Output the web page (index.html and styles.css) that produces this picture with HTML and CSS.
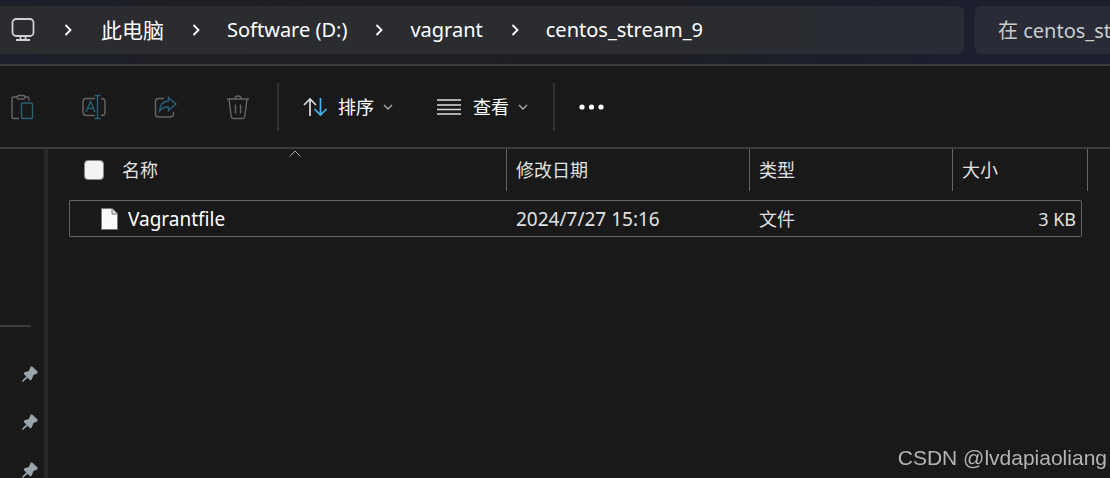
FILE: index.html
```html
<!DOCTYPE html>
<html lang="zh-CN">
<head>
<meta charset="utf-8">
<meta name="viewport" content="width=device-width, initial-scale=1">
<title>centos_stream_9</title>
<link rel="stylesheet" href="styles.css">
</head>
<body>
<svg class="defs" width="0" height="0" aria-hidden="true">
  <symbol id="chevron" viewBox="0 0 8 12"><path d="M1.500 1 6.500 6 1.500 11"/></symbol>
  <symbol id="down" viewBox="0 0 10 6"><path d="M1 1 5 5 9 1"/></symbol>
  <symbol id="pin" viewBox="0 0 16 16"><path d="M8.700 .4 10.500.7 15.500 5.500 15.600 7.200 11.300 9.200 9.800 13.500 8.300 14.400 5.500 11.800 1.300 15.700.2 15.700.3 14.500 4.200 10.500 1.700 7.800 2.500 6.200 6.700 5Z"/></symbol>
</svg>
<header class="topbar">
  <nav class="address" aria-label="路径">
    <svg class="pc" viewBox="0 0 24 24"><rect x="1.500" y="1" width="21" height="17" rx="3.500"/><path d="M9.500 18v4M14.500 18v4M5 22h14"/></svg>
    <svg class="sep"><use href="#chevron"/></svg>
    <a class="cjk" href="#">此电脑</a>
    <svg class="sep"><use href="#chevron"/></svg>
    <a href="#">Software (D:)</a>
    <svg class="sep"><use href="#chevron"/></svg>
    <a href="#">vagrant</a>
    <svg class="sep"><use href="#chevron"/></svg>
    <a href="#">centos_stream_9</a>
  </nav>
  <input class="search" type="text" aria-label="搜索" placeholder="在 centos_stream_9 中搜索">
</header>
<div class="toolbar">
  <div class="group edit">
    <button aria-label="粘贴" disabled><svg class="tool" viewBox="0 0 24 26"><path d="M7 3H3.500Q2 3 2 4.500v18.500q0 1.500 1.500 1.500H9M15 3h2.500Q19 3 19 4.500v2"/><rect x="7" y="1.500" width="8" height="3.500" rx="1.700"/><rect class="blue" x="11.500" y="9" width="11" height="15.500" rx="1.500"/></svg></button>
    <button aria-label="重命名" disabled><svg class="tool" viewBox="0 0 24 26"><path d="M13 4.500H4.500Q1 4.500 1 8v10q0 3.500 3.500 3.500H13M19 4.500h.5Q23 4.500 23 8v10q0 3.500-3.500 3.500H19"/><path class="blue" d="M4 18 8.500 7.500 13 18M5.500 14.500h6M12.500 1.500h6M15.500 1.500v23M12.500 24.500h6"/></svg></button>
    <button aria-label="共享" disabled><svg class="tool" viewBox="0 0 24 26"><path d="M10 4.500H4.500Q1.500 4.500 1.500 7.500v12.500q0 3 3 3H16q3.500 0 3.500-3v-2"/><path class="blue" d="M14.500 3.500 22 10 14.500 16.500V13Q9 12.500 5.500 17 6 7.500 14.500 7Z"/></svg></button>
    <button aria-label="删除" disabled><svg class="tool" viewBox="0 0 24 26"><path d="M1 5h22M8.500 5Q9 2 12 2t3.500 3M3 5l2.200 17.500q.3 2 2 2h9.600q1.700 0 2-2L21 5M9.500 10.500v9M14.500 10.500v9"/></svg></button>
  </div>
  <div class="group menus">
    <button><svg class="sort" viewBox="0 0 26 20"><path d="M8 19V2M2 8 8 2l6 6"/><path class="bright" d="M18.500 1v17M12.500 12l6 6 6-6"/></svg>排序<svg class="down"><use href="#down"/></svg></button>
    <button><svg class="lines" viewBox="0 0 24 16"><path d="M0 1h24M0 6h24M0 10.500h24M0 15h24"/></svg>查看<svg class="down"><use href="#down"/></svg></button>
  </div>
  <div class="group more">
    <button aria-label="更多"><svg class="dots" viewBox="0 0 25 6"><circle cx="3" cy="3" r="2.600"/><circle cx="12.500" cy="3" r="2.600"/><circle cx="22" cy="3" r="2.600"/></svg></button>
  </div>
</div>
<div class="body">
  <aside class="side">
    <hr>
    <ul>
      <li><svg><use href="#pin"/></svg></li>
      <li><svg><use href="#pin"/></svg></li>
      <li><svg><use href="#pin"/></svg></li>
    </ul>
  </aside>
  <main>
    <table>
      <colgroup><col><col class="c-date"><col class="c-type"><col class="c-size"></colgroup>
      <thead>
        <tr>
          <th><div class="head first"><input id="all" type="checkbox"><label for="all">名称</label><svg class="asc" viewBox="0 0 12 7"><path d="M.5 6.500 6 1l5.500 5.500"/></svg></div></th>
          <th><div class="head">修改日期</div></th>
          <th><div class="head">类型</div></th>
          <th><div class="head last">大小</div></th>
        </tr>
      </thead>
      <tbody>
        <tr>
          <td><div class="file"><svg viewBox="0 0 17 22"><path d="M.5.5H11l5.500 5.500v15.500H.5Z"/><path class="fold" d="M11 .5V6h5.500"/></svg>Vagrantfile</div></td>
          <td class="date">2024/7/27 15:16</td>
          <td>文件</td>
          <td>3 KB</td>
        </tr>
      </tbody>
    </table>
  </main>
</div>
<div class="watermark">CSDN @lvdapiaoliang</div>
</body>
</html>
```
FILE: styles.css
```css
* { box-sizing: border-box; }
body {
  margin: 0;
  min-height: 100vh;
  display: flex;
  flex-direction: column;
  overflow: hidden;
  background: #191919;
  color: #fff;
  font: 18px/24px "Noto Sans", "Noto Sans CJK SC", sans-serif;
}
svg { flex: none; fill: none; stroke: currentColor; }
.defs { position: absolute; }
button { display: flex; align-items: center; padding: 0; border: 0; background: none; color: inherit; font: inherit; }

.topbar {
  display: flex;
  gap: 11px;
  padding: 6px 0 10px;
  border-bottom: 2px solid #3b3b3b;
  background: linear-gradient(90deg, #1b202b, #1f1f25 15%, #1e1f25 60%, #1b1f2e 85%);
}
.address {
  flex: 1;
  display: flex;
  align-items: center;
  height: 48px;
  padding-left: 11px;
  border-radius: 0 6px 6px 0;
  background: linear-gradient(90deg, #2b2c30 70%, #292c35);
  font-size: 20px;
}
.address a { color: #fff; text-decoration: none; white-space: nowrap; }
.address .cjk { font-size: 21px; }
.pc { width: 24px; height: 24px; margin-right: 1px; color: #d0d0d0; stroke-width: 1.8; }
.sep { width: 8px; height: 12px; margin: 0 27px 0 28px; stroke-width: 1.8; }
.pc + .sep { margin-right: 29px; }
.search {
  width: 135px;
  height: 48px;
  padding: 0 0 0 23px;
  border: 0;
  border-radius: 6px 0 0 6px;
  background: #292c37;
  color: #fff;
  font: 20px "Noto Sans", "Noto Sans CJK SC", sans-serif;
}
.search::placeholder { color: #ccc; opacity: 1; }

.toolbar { display: flex; align-items: center; height: 83px; border-bottom: 2px solid #3b3b3b; }
.group { display: flex; align-items: center; height: 48px; }
.edit { gap: 48px; padding: 0 27px 0 10px; }
.tool { width: 24px; height: 26px; color: #656565; stroke-width: 1.4; }
.blue { stroke: #296078; }
.menus { gap: 44px; padding: 0 25px 0 23px; border: solid #303030; border-width: 0 2px; }
.sort { width: 26px; height: 20px; margin-right: 10px; color: #ddd; stroke-width: 1.7; }
.bright { stroke: #45b3ee; }
.lines { width: 24px; height: 16px; margin-right: 12px; color: #ddd; stroke-width: 1.5; }
.down { width: 10px; height: 6px; margin-left: 9px; color: #aaa; stroke-width: 1.4; }
.more { padding-left: 24px; }
.dots { width: 25px; height: 6px; fill: #fff; stroke: none; }

.body { flex: 1; display: flex; }
.side { width: 48px; border-right: 4px solid #292929; }
.side hr { width: 31px; margin: 176px 0 39px; border: 0; border-top: 2px solid #3b3b3b; }
.side ul { display: grid; gap: 32px; margin: 0; padding: 0 0 0 22px; list-style: none; }
.side li { height: 16px; }
.side svg { display: block; width: 16px; height: 16px; fill: #98a4aa; stroke: none; }
main { flex: 1; padding: 0 28px 0 21px; }
table { width: 100%; border-spacing: 0; table-layout: fixed; color: #e2e2e2; }
.c-date { width: 243px; }
.c-type { width: 203px; }
.c-size { width: 129px; }
th { padding: 0 0 9px; font-weight: 400; text-align: left; }
.head { display: flex; align-items: center; height: 42px; padding-left: 9px; border-right: 1px solid #646464; }
.first { position: relative; padding-left: 15px; }
.last { margin-right: -6px; }
.head input { appearance: none; width: 20px; height: 20px; margin: 0 18px 0 0; border: 1px solid #888; border-radius: 4px; background: #f3f3f3; }
.asc { position: absolute; left: 220px; top: 1px; width: 12px; height: 7px; color: #aaa; }
td { height: 37px; padding: 0 0 0 9px; border: solid #646464; border-width: 1px 0; }
td:first-child { padding-left: 31px; border-left-width: 1px; border-radius: 2px 0 0 2px; }
td:last-child { padding-right: 5px; border-right-width: 1px; border-radius: 0 2px 2px 0; text-align: right; }
.date, .file { font-size: 19px; }
.file { display: flex; align-items: center; gap: 10px; color: #fff; }
.file svg { width: 17px; height: 22px; fill: #fafafa; stroke: #777; }
.file .fold { fill: #ddd; }

.watermark {
  position: fixed;
  right: 3px;
  bottom: 6px;
  color: #b4b4b4;
  font: 21px/28px "Liberation Sans", sans-serif;
}
```
